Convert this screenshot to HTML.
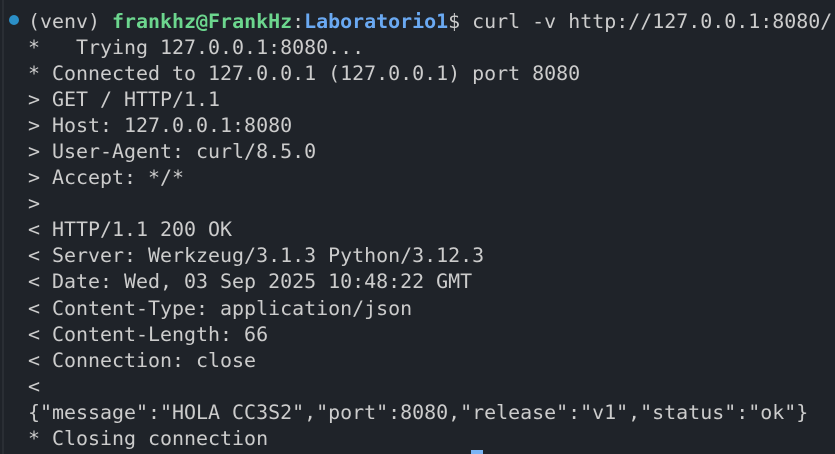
<!DOCTYPE html>
<html><head><style>
html,body{margin:0;padding:0;background:#1f2329;width:835px;height:454px;overflow:hidden}
.t{position:absolute;left:28px;top:8px;font-family:"DejaVu Sans Mono","Liberation Mono",monospace;font-size:19.95px;line-height:26.05px;color:#cccccc;white-space:pre}
.g{color:#6cd68e;font-weight:bold}
.b{color:#6aa9f2;font-weight:bold}
.dot{position:absolute;left:9px;top:15px;width:10px;height:10px;border-radius:50%;background:#2b8fc7}
.bar{position:absolute;left:2px;top:0;width:2px;height:454px;background:#2a2e34}
.cur{position:absolute;left:471px;top:450px;width:12px;height:4px;background:#7ab4f5}
</style></head><body>
<div class="bar"></div><div class="dot"></div>
<div class="t">(venv) <span class="g">frankhz@FrankHz</span>:<span class="b">Laboratorio1</span>$ curl -v http://127.0.0.1:8080/
*   Trying 127.0.0.1:8080...
* Connected to 127.0.0.1 (127.0.0.1) port 8080
&gt; GET / HTTP/1.1
&gt; Host: 127.0.0.1:8080
&gt; User-Agent: curl/8.5.0
&gt; Accept: */*
&gt; 
&lt; HTTP/1.1 200 OK
&lt; Server: Werkzeug/3.1.3 Python/3.12.3
&lt; Date: Wed, 03 Sep 2025 10:48:22 GMT
&lt; Content-Type: application/json
&lt; Content-Length: 66
&lt; Connection: close
&lt; 
{"message":"HOLA CC3S2","port":8080,"release":"v1","status":"ok"}
* Closing connection</div>
<div class="cur"></div>
</body></html>
